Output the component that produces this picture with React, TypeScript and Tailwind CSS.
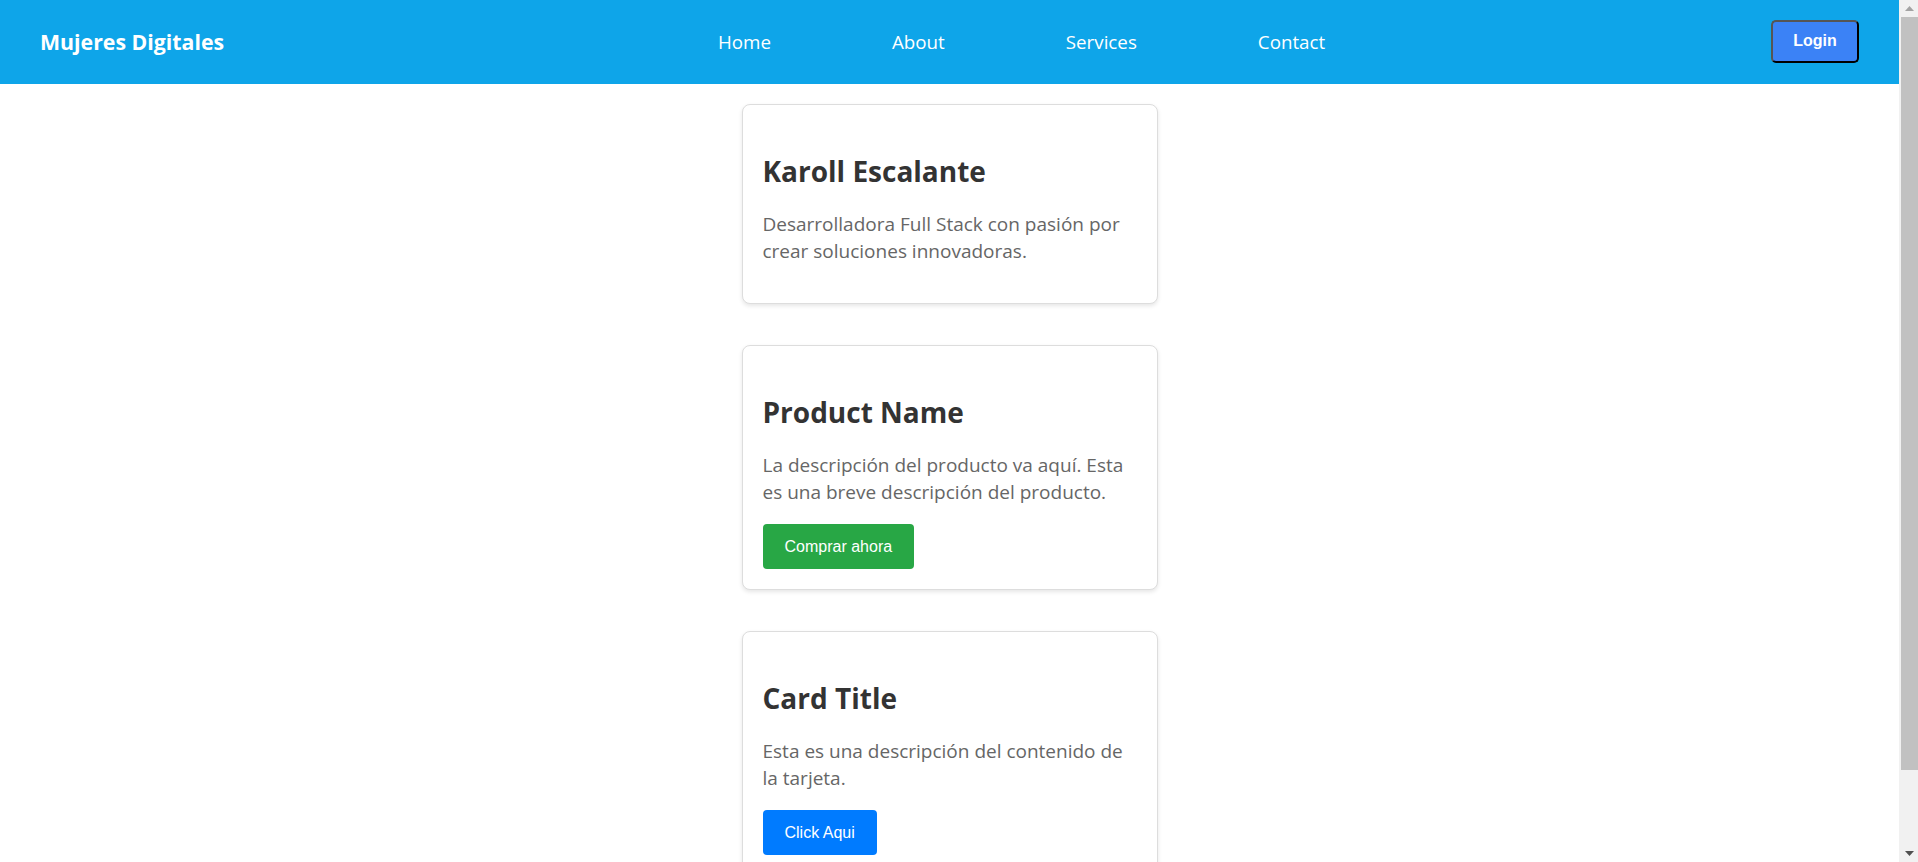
import React from "react";

const sans = { fontFamily: '"Open Sans", "Noto Sans", sans-serif' };

function Card({
  title,
  text,
  button,
}: {
  title: string;
  text: string;
  button?: { label: string; color: string };
}) {
  return (
    <div className="w-[416px] shrink-0 rounded-[8px] border border-[#dddddd] bg-white p-[20px] shadow-[0_2px_4px_rgba(0,0,0,0.1)]">
      <h2 className="mt-[28px] text-[28px] font-bold leading-[36px] text-[#333333]">{title}</h2>
      <p className="mt-[22px] mb-[18px] text-[19px] leading-[27px] text-[#666666]">{text}</p>
      {button && (
        <button
          className={`h-[45px] rounded-[4px] px-[22px] font-['Liberation_Sans',Arial,sans-serif] text-[16px] text-white ${button.color}`}
        >
          {button.label}
        </button>
      )}
    </div>
  );
}

function Scrollbar() {
  return (
    <div className="flex h-full w-[19px] shrink-0 flex-col bg-[#f1f1f1]">
      <div className="flex h-[17px] items-center justify-center pl-[2px]">
        <svg width="9" height="5" viewBox="0 0 9 5">
          <path d="M0 5 L4.5 0 L9 5 Z" fill="#a3a3a3" />
        </svg>
      </div>
      <div className="ml-[2px] h-[753px] bg-[#c1c1c1]" />
      <div className="flex-1" />
      <div className="flex h-[17px] items-center justify-center pl-[2px]">
        <svg width="9" height="5" viewBox="0 0 9 5">
          <path d="M0 0 L9 0 L4.5 5 Z" fill="#505050" />
        </svg>
      </div>
    </div>
  );
}

export default function App() {
  return (
    <div className="flex h-screen w-full overflow-hidden bg-white" style={sans}>
      <div className="flex min-w-0 flex-1 flex-col overflow-hidden">
        <nav className="flex h-[84px] shrink-0 items-center bg-[#0ea5e9] pl-[40px] pr-[40px]">
          <div className="w-[182px] whitespace-nowrap text-[21.3px] font-bold text-white">Mujeres Digitales</div>
          <ul className="ml-[496px] flex items-center gap-[121px] text-[18.75px] text-white">
            <li>Home</li>
            <li>About</li>
            <li>Services</li>
            <li>Contact</li>
          </ul>
          <button className="mb-[2px] ml-auto h-[43px] w-[88px] rounded-[5px] border-2 border-[#555555] border-r-black border-b-black bg-[#3b82f6] font-['Liberation_Sans',Arial,sans-serif] text-[16px] font-bold text-white">
            Login
          </button>
        </nav>
        <main className="flex flex-col items-center gap-[41px] pt-[20px]">
          <Card
            title="Karoll Escalante"
            text="Desarrolladora Full Stack con pasión por crear soluciones innovadoras."
          />
          <Card
            title="Product Name"
            text="La descripción del producto va aquí. Esta es una breve descripción del producto."
            button={{ label: "Comprar ahora", color: "bg-[#28a745]" }}
          />
          <Card
            title="Card Title"
            text="Esta es una descripción del contenido de la tarjeta."
            button={{ label: "Click Aqui", color: "bg-[#007bff]" }}
          />
        </main>
      </div>
      <Scrollbar />
    </div>
  );
}
